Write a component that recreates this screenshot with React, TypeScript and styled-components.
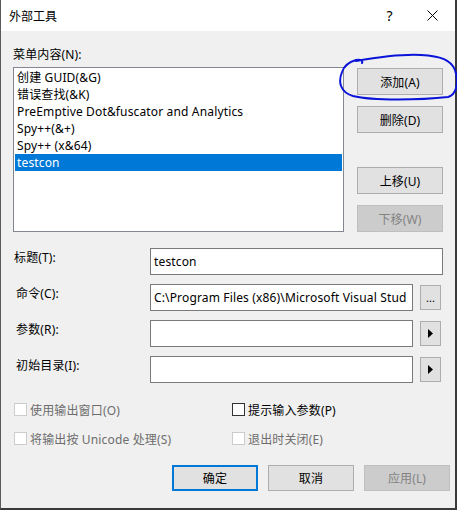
import React from "react";
import styled, { createGlobalStyle } from "styled-components";

const Global = createGlobalStyle`
  html, body { margin: 0; padding: 0; background: #f0f0f0; }
  body { font-family: "Noto Sans", "Noto Sans CJK SC", sans-serif; font-size: 12px; letter-spacing: 0.15px; color: #000; }
  * { box-sizing: border-box; }
`;

const Window = styled.div`
  position: relative;
  width: 457px;
  height: 510px;
  background: #f0f0f0;
  border-left: 1px solid #5a5a5a;
  border-right: 2px solid #3a3a3a;
  border-bottom: 2px solid #3a3a3a;
  display: flex;
  flex-direction: column;
`;

const TitleBar = styled.div`
  height: 31px;
  background: #fff;
  display: flex;
  align-items: center;
  padding-left: 8px;
  flex-shrink: 0;
`;

const TitleText = styled.div`
  flex: 1;
  font-size: 12px;
  letter-spacing: 0;
  font-family: "Noto Sans CJK SC", sans-serif;
`;

const TitleButton = styled.div<{ $shift?: number }>`
  width: 45px;
  height: 31px;
  display: flex;
  align-items: center;
  justify-content: center;
  padding-left: ${(p) => p.$shift ?? 0}px;
  font-size: 14px;
  font-family: "Noto Sans", sans-serif;
`;

const Body = styled.div`
  flex: 1;
  display: flex;
  flex-direction: column;
  padding: 15px 11px 0 12px;
`;

const TopGrid = styled.div`
  display: grid;
  grid-template-columns: 331px 86px;
  column-gap: 13px;
  row-gap: 4px;
`;

const Label = styled.div<{ $indent?: number }>`
  line-height: 17px;
  height: 17px;
  padding-left: ${(p) => p.$indent ?? 0}px;
  white-space: nowrap;
`;

const ListBox = styled.div`
  height: 165px;
  background: #fff;
  border: 1px solid #828790;
  padding: 1px;
  display: flex;
  flex-direction: column;
`;

const ListItem = styled.div<{ $selected?: boolean }>`
  height: 17px;
  line-height: 17px;
  padding-left: 2px;
  white-space: nowrap;
  background: ${(p) => (p.$selected ? "#0078d7" : "transparent")};
  color: ${(p) => (p.$selected ? "#fff" : "#000")};
`;

const SideButtons = styled.div`
  display: flex;
  flex-direction: column;
  padding-top: 1px;
`;

const Button = styled.div<{ $disabled?: boolean; $default?: boolean; $gap?: number; $h?: number }>`
  width: 86px;
  height: ${(p) => p.$h ?? 27}px;
  margin-top: ${(p) => p.$gap ?? 0}px;
  display: flex;
  align-items: center;
  justify-content: center;
  background: ${(p) => (p.$disabled ? "#cccccc" : "#e1e1e1")};
  border: ${(p) =>
    p.$default ? "2px solid #0078d7" : p.$disabled ? "1px solid #bfbfbf" : "1px solid #adadad"};
  color: ${(p) => (p.$disabled ? "#838383" : "#000")};
  white-space: nowrap;
`;

const FieldGrid = styled.div`
  margin-top: 16px;
  display: grid;
  grid-template-columns: 137px 263px 31px;
  grid-auto-rows: 27px;
  row-gap: 9px;
`;

const FieldLabel = styled(Label)`
  margin-top: 1px;
`;

const Input = styled.div<{ $span?: boolean }>`
  grid-column: ${(p) => (p.$span ? "2 / 4" : "2 / 3")};
  height: 27px;
  background: #fff;
  border: 1px solid #7a7a7a;
  padding: 0 3px;
  display: flex;
  align-items: center;
  overflow: hidden;
  white-space: nowrap;
  margin-right: ${(p) => (p.$span ? 1 : 0)}px;
`;

const SmallButton = styled.div`
  width: 21px;
  height: 25px;
  margin-left: 7px;
  align-self: center;
  background: #e1e1e1;
  border: 1px solid #adadad;
  display: flex;
  align-items: center;
  justify-content: center;
  font-size: 11px;
  letter-spacing: 0;
  line-height: 1;
`;

const CheckGrid = styled.div`
  margin-top: 18px;
  display: grid;
  grid-template-columns: 218px 200px;
  grid-auto-rows: 17px;
  row-gap: 12px;
  padding-left: 1px;
`;

const CheckRow = styled.div<{ $disabled?: boolean }>`
  display: flex;
  align-items: center;
  gap: 3px;
  color: ${(p) => (p.$disabled ? "#6d6d6d" : "#000")};
  white-space: nowrap;
`;

const Box = styled.div<{ $disabled?: boolean }>`
  width: 13px;
  height: 13px;
  background: #fff;
  border: 1px solid ${(p) => (p.$disabled ? "#cccccc" : "#333333")};
  flex-shrink: 0;
`;

const Footer = styled.div`
  margin-top: 18px;
  margin-right: -6px;
  display: flex;
  justify-content: flex-end;
  gap: 10px;
`;

const Annotation = styled.svg`
  position: absolute;
  left: 0;
  top: 0;
  pointer-events: none;
`;

const items = [
  "创建 GUID(&G)",
  "错误查找(&K)",
  "PreEmptive Dot&fuscator and Analytics",
  "Spy++(&+)",
  "Spy++ (x&64)",
  "testcon",
];

const Arrow = () => (
  <svg width="5" height="9" viewBox="0 0 5 9">
    <path d="M0 0 L5 4.5 L0 9 Z" fill="#000" />
  </svg>
);

export default function App() {
  return (
    <>
      <Global />
      <Window>
        <TitleBar>
          <TitleText>外部工具</TitleText>
          <TitleButton $shift={4}>?</TitleButton>
          <TitleButton>
            <svg width="11" height="11" viewBox="0 0 11 11">
              <path d="M0.5 0.5 L10.5 10.5 M10.5 0.5 L0.5 10.5" stroke="#000" strokeWidth="1" />
            </svg>
          </TitleButton>
        </TitleBar>
        <Body>
          <TopGrid>
            <Label>菜单内容(N):</Label>
            <div />
            <ListBox>
              {items.map((t, i) => (
                <ListItem key={t} $selected={i === 5}>
                  {t}
                </ListItem>
              ))}
            </ListBox>
            <SideButtons>
              <Button>添加(A)</Button>
              <Button $gap={11}>删除(D)</Button>
              <Button $gap={34}>上移(U)</Button>
              <Button $gap={11} $disabled>
                下移(W)
              </Button>
            </SideButtons>
          </TopGrid>
          <FieldGrid>
            <FieldLabel $indent={1}>标题(T):</FieldLabel>
            <Input $span>testcon</Input>
            <FieldLabel $indent={3}>命令(C):</FieldLabel>
            <Input>C:\Program Files (x86)\Microsoft Visual Stud</Input>
            <SmallButton>...</SmallButton>
            <FieldLabel $indent={3}>参数(R):</FieldLabel>
            <Input />
            <SmallButton>
              <Arrow />
            </SmallButton>
            <FieldLabel $indent={3}>初始目录(I):</FieldLabel>
            <Input />
            <SmallButton>
              <Arrow />
            </SmallButton>
          </FieldGrid>
          <CheckGrid>
            <CheckRow $disabled>
              <Box $disabled />
              使用输出窗口(O)
            </CheckRow>
            <CheckRow>
              <Box />
              提示输入参数(P)
            </CheckRow>
            <CheckRow $disabled>
              <Box $disabled />
              将输出按 Unicode 处理(S)
            </CheckRow>
            <CheckRow $disabled>
              <Box $disabled />
              退出时关闭(E)
            </CheckRow>
          </CheckGrid>
          <Footer>
            <Button $default $h={26}>确定</Button>
            <Button $h={26}>取消</Button>
            <Button $h={26} $disabled>
              应用(L)
            </Button>
          </Footer>
        </Body>
        <Annotation width="457" height="510">
          <path
            d="M361 63 C362 61, 360 59, 355 60 C348 62, 343 66, 341 72 C337 82, 339 92, 352 96 C372 101, 420 100, 447 97 C456 94, 458 82, 454 70 C450 60, 440 56, 420 55 C400 54, 378 57, 355 61"
            fill="none"
            stroke="#0a14d8"
            strokeWidth="2"
            strokeLinecap="round"
          />
        </Annotation>
      </Window>
    </>
  );
}
